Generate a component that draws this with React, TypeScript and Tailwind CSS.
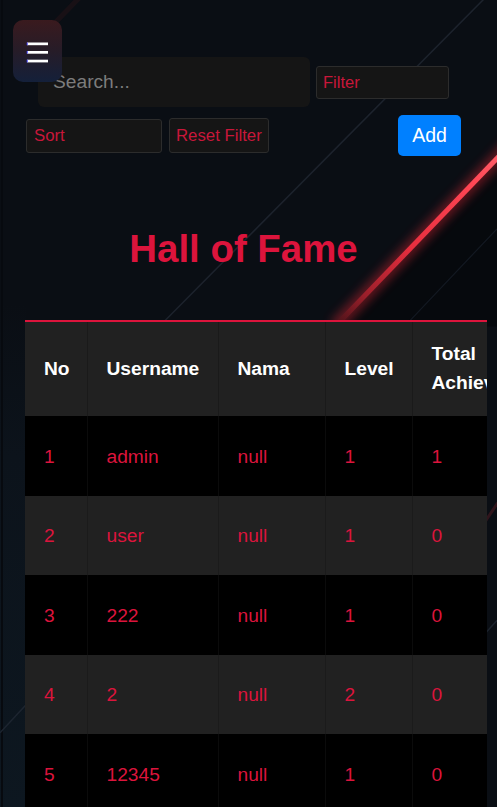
import React from "react";

const rows = [
  ["1", "admin", "null", "1", "1"],
  ["2", "user", "null", "1", "0"],
  ["3", "222", "null", "1", "0"],
  ["4", "2", "null", "2", "0"],
  ["5", "12345", "null", "1", "0"],
];

function Background() {
  return (
    <svg
      className="absolute inset-0 w-full h-full pointer-events-none"
      viewBox="0 0 497 807"
      preserveAspectRatio="none"
    >
      <defs>
        <linearGradient id="redGrad" gradientUnits="userSpaceOnUse" x1="533" y1="120" x2="335" y2="324">
          <stop offset="0" stopColor="#ff7a82" />
          <stop offset="0.3" stopColor="#ff4654" />
          <stop offset="0.62" stopColor="#e62e3e" />
          <stop offset="0.85" stopColor="#9a1f2a" />
          <stop offset="1" stopColor="#441218" />
        </linearGradient>
        <linearGradient id="leftGrad" gradientUnits="userSpaceOnUse" x1="0" y1="300" x2="0" y2="807">
          <stop offset="0" stopColor="#0c131b" stopOpacity="0" />
          <stop offset="0.3" stopColor="#0c131b" stopOpacity="1" />
          <stop offset="1" stopColor="#0d1720" stopOpacity="1" />
        </linearGradient>
        <filter id="blur" x="-20%" y="-20%" width="140%" height="140%">
          <feGaussianBlur stdDeviation="5" />
        </filter>
      </defs>
      <rect x="0" y="300" width="26" height="507" fill="url(#leftGrad)" />
      <rect x="1" y="0" width="2" height="807" fill="#070a0f" />
      <polygon points="533,120 335,324 497,324 497,120" fill="#000000" opacity="0.35" />
      <line x1="487" y1="-4" x2="150" y2="333" stroke="#1d232d" strokeWidth="1.5" />
      <line x1="497" y1="227" x2="410" y2="318" stroke="#131922" strokeWidth="1.2" />
      <line x1="0" y1="727" x2="30" y2="695" stroke="#1d2530" strokeWidth="1.5" />
      <line x1="520" y1="590" x2="470" y2="645" stroke="#1b222c" strokeWidth="1.5" />
      <line x1="85" y1="-8" x2="40" y2="38" stroke="#2a1418" strokeWidth="5" opacity="0.45" />
      <line x1="505" y1="488" x2="480" y2="525" stroke="#4a1a22" strokeWidth="3" opacity="0.6" />
      <line x1="533" y1="120" x2="335" y2="324" stroke="#ff2a3a" strokeWidth="14" opacity="0.35" filter="url(#blur)" />
      <line x1="533" y1="120" x2="335" y2="324" stroke="url(#redGrad)" strokeWidth="5" />
    </svg>
  );
}

export default function App() {
  return (
    <div
      className="relative w-full min-h-screen overflow-hidden bg-[#0a0e14]"
      style={{ fontFamily: '"Liberation Sans", Arial, sans-serif' }}
    >
      <Background />

      <div className="relative">
        {/* controls row 1 */}
        <div className="flex items-center pt-[57px] pl-[38px]">
          <input
            className="w-[272px] h-[50px] rounded-[6px] bg-[#151515] px-[15px] text-[19.2px] text-white placeholder:text-[#7c7c7c] outline-none"
            placeholder="Search..."
          />
          <input
            className="ml-[6px] w-[133px] h-[33px] rounded-[3px] bg-[#151515] border border-[#2c2c2c] px-[6px] text-[16.5px] text-[#c8173a] placeholder:text-[#c8173a] outline-none"
            placeholder="Filter"
          />
        </div>

        {/* controls row 2 */}
        <div className="flex items-center pl-[26px] pr-[36px] mt-[8px]">
          <div className="w-[136px] h-[34px] rounded-[3px] bg-[#151515] border border-[#2c2c2c] px-[7px] flex items-center text-[16.8px] text-[#c8173a]">
            Sort
          </div>
          <button className="ml-[7px] w-[100px] h-[35px] rounded-[3px] bg-[#151515] border border-[#2c2c2c] px-[6px] flex items-center text-[16.8px] text-[#c8173a]">
            Reset Filter
          </button>
          <button className="ml-auto w-[63px] h-[41px] rounded-[5px] bg-[#0080ff] text-white text-[19.5px] flex items-center justify-center">
            Add
          </button>
        </div>

        {/* heading */}
        <h1 className="mt-[71px] pr-[10px] h-[44px] leading-[44px] text-center text-[38.4px] font-bold text-[#dc143c]">
          Hall of Fame
        </h1>

        {/* table */}
        <div className="mt-[49px] ml-[25px] w-[462px] overflow-hidden border-t-2 border-[#dc143c]">
          <table className="table-fixed border-collapse w-[700px] text-[19.2px] leading-[28.8px]">
            <colgroup>
              <col className="w-[62px]" />
              <col className="w-[131px]" />
              <col className="w-[107px]" />
              <col className="w-[87px]" />
              <col className="w-[170px]" />
              <col className="w-[143px]" />
            </colgroup>
            <thead>
              <tr className="h-[94px] bg-[#212121]">
                {["No", "Username", "Nama", "Level", "Total Achievement", "Action"].map((h) => (
                  <th
                    key={h}
                    className="px-[19px] text-left align-middle font-bold text-white border-r border-[#1a1a1a]"
                  >
                    {h}
                  </th>
                ))}
              </tr>
            </thead>
            <tbody>
              {rows.map((r, i) => (
                <tr key={i} className={`h-[79.5px] ${i % 2 === 0 ? "bg-black" : "bg-[#212121]"}`}>
                  {r.map((c, j) => (
                    <td
                      key={j}
                      className={`px-[19px] pt-[3px] text-left align-middle text-[#dc143c] border-r ${i % 2 === 0 ? "border-[#0b0b0b]" : "border-[#1b1b1b]"}`}
                    >
                      {c}
                    </td>
                  ))}
                  <td className="px-[19px] border-r border-[#1a1a1a]"></td>
                </tr>
              ))}
            </tbody>
          </table>
        </div>
      </div>

      {/* hamburger */}
      <button className="absolute top-[20px] left-[13px] w-[49px] h-[62px] rounded-[10px] bg-[linear-gradient(180deg,#3a1a1e_0%,#261c28_50%,#14203a_100%)] flex items-center justify-center">
        <svg width="49" height="62" viewBox="0 0 49 62">
          <rect x="14" y="22.5" width="21" height="2.7" fill="#ffffff" />
          <rect x="14" y="31" width="21" height="2.7" fill="#ffffff" />
          <rect x="14" y="39.7" width="21" height="2.7" fill="#ffffff" />
          <rect x="13.7" y="22.5" width="1" height="2.7" fill="#3a3aff" />
          <rect x="13.7" y="31" width="1" height="2.7" fill="#3a3aff" />
          <rect x="13.7" y="39.7" width="1" height="2.7" fill="#3a3aff" />
        </svg>
      </button>
    </div>
  );
}
